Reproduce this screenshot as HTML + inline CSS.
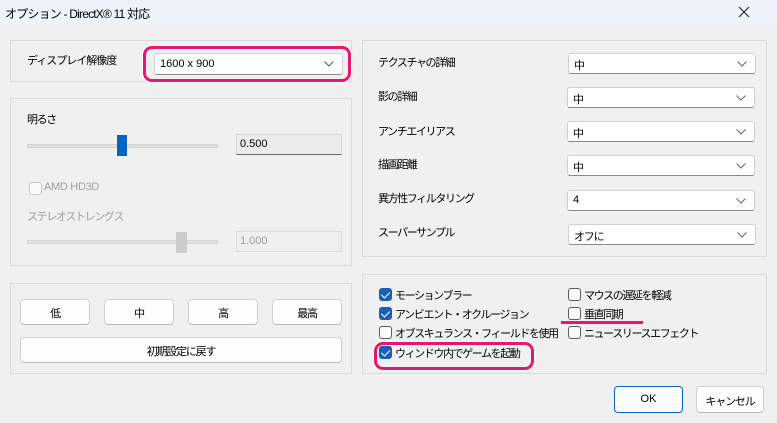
<!DOCTYPE html>
<html><head><meta charset="utf-8"><style>
*{box-sizing:border-box;margin:0;padding:0}
body{width:777px;height:423px;background:#f0f0f0;font-family:"Liberation Sans","Noto Sans CJK JP",sans-serif;font-size:12px;color:#000;position:relative;overflow:hidden}
.a{position:absolute}
.title{left:0;top:0;width:777px;height:24px;background:#eef2fa}
.panel{position:absolute;border:1px solid #dadada}
.dd{position:absolute;background:#fff;border:1px solid #d0d0d0;border-bottom-color:#8a8a8a;border-radius:3px;height:21px;font-size:12px;padding:3px 0 0 5px}
.dd svg{position:absolute;right:8px;top:7px}
.btn{position:absolute;background:#fdfdfd;border:1px solid #d0d0d0;border-bottom-color:#b8b8b8;border-radius:4px;text-align:center;font-size:12px}
.cb{position:absolute;width:13px;height:13px;border:1px solid #5c5c5c;border-radius:3px;background:#fbfbfb}
.cb.on{background:#1a5fb4;border-color:#1a5fb4}
.cb.on::after{content:"";position:absolute;left:3px;top:1px;width:4px;height:7px;border:solid #fff;border-width:0 1.5px 1.5px 0;transform:rotate(45deg)}
.lbl{position:absolute;font-size:11px;white-space:nowrap;letter-spacing:-1.4px}
.j{font-size:11px;letter-spacing:-1.2px}
</style></head><body>
<div class="a title"></div>
<div class="lbl" style="left:5px;top:5px;font-size:12px;letter-spacing:-0.8px">オプション - DirectX® 11 対応</div>
<svg class="a" style="left:738px;top:6px" width="12" height="12"><path d="M1 1L11 11M11 1L1 11" stroke="#222" stroke-width="1.1"/></svg>

<div class="panel" style="left:10px;top:40px;width:342px;height:42px"></div>
<div class="lbl" style="left:27px;top:52px;letter-spacing:-1px">ディスプレイ解像度</div>
<div class="a" style="left:143px;top:46px;width:208px;height:36px;border:3px solid #e4186e;border-radius:9px;box-shadow:0 0 0 1px #fff"></div>
<div class="dd" style="left:154px;top:53px;width:189px;height:22px;padding-top:4px;font-size:11px">1600 x 900<svg width="10" height="6"><path d="M0.5 0.5L5 5L9.5 0.5" stroke="#555" fill="none"/></svg></div>

<div class="panel" style="left:10px;top:98px;width:342px;height:168px"></div>
<div class="lbl" style="left:27px;top:111px">明るさ</div>
<div class="a" style="left:27px;top:144px;width:191px;height:4px;background:#e2e2e2;border:1px solid #d2d2d2"></div>
<div class="a" style="left:117px;top:135px;width:10px;height:21px;background:#0067c0"></div>
<div class="a" style="left:236px;top:134px;width:106px;height:21px;background:#ececec;border:1px solid #d8d8d8;border-bottom:1px solid #6a6a6a;padding:3px 3px;font-size:11px">0.500</div>
<div class="cb" style="left:29px;top:182px;border-color:#c8c8c8"></div>
<div class="lbl" style="left:44px;top:181px;color:#a0a0a0;letter-spacing:-0.3px">AMD HD3D</div>
<div class="lbl" style="left:27px;top:208px;color:#a0a0a0">ステレオストレングス</div>
<div class="a" style="left:27px;top:240px;width:191px;height:4px;background:#e2e2e2;border:1px solid #d6d6d6"></div>
<div class="a" style="left:176px;top:232px;width:11px;height:21px;background:#cccccc"></div>
<div class="a" style="left:236px;top:231px;width:106px;height:21px;background:#efefef;border:1px solid #dddddd;padding:3px 3px;color:#a0a0a0;font-size:11px">1.000</div>

<div class="panel" style="left:10px;top:283px;width:342px;height:91px"></div>
<div class="btn j" style="left:20px;top:299px;width:70px;height:26px;padding-top:5px">低</div>
<div class="btn j" style="left:104px;top:299px;width:70px;height:26px;padding-top:5px">中</div>
<div class="btn j" style="left:188px;top:299px;width:70px;height:26px;padding-top:5px">高</div>
<div class="btn j" style="left:272px;top:299px;width:70px;height:26px;padding-top:5px">最高</div>
<div class="btn j" style="left:20px;top:337px;width:322px;height:26px;padding-top:5px">初期設定に戻す</div>

<div class="panel" style="left:362px;top:40px;width:405px;height:217px"></div>
<div class="lbl" style="left:378px;top:54px">テクスチャの詳細</div>
<div class="lbl" style="left:378px;top:88px">影の詳細</div>
<div class="lbl" style="left:378px;top:123px">アンチエイリアス</div>
<div class="lbl" style="left:378px;top:156px">描画距離</div>
<div class="lbl" style="left:378px;top:190px">異方性フィルタリング</div>
<div class="lbl" style="left:378px;top:224px">スーパーサンプル</div>
<div class="dd j" style="left:568px;top:53px;width:188px">中<svg width="10" height="6"><path d="M0.5 0.5L5 5L9.5 0.5" stroke="#666" fill="none"/></svg></div>
<div class="dd j" style="left:567px;top:87px;width:188px">中<svg width="10" height="6"><path d="M0.5 0.5L5 5L9.5 0.5" stroke="#666" fill="none"/></svg></div>
<div class="dd j" style="left:567px;top:121px;width:188px">中<svg width="10" height="6"><path d="M0.5 0.5L5 5L9.5 0.5" stroke="#666" fill="none"/></svg></div>
<div class="dd j" style="left:567px;top:155px;width:188px">中<svg width="10" height="6"><path d="M0.5 0.5L5 5L9.5 0.5" stroke="#666" fill="none"/></svg></div>
<div class="dd j" style="left:567px;top:190px;width:188px">4<svg width="10" height="6"><path d="M0.5 0.5L5 5L9.5 0.5" stroke="#666" fill="none"/></svg></div>
<div class="dd j" style="left:568px;top:224px;width:188px">オフに<svg width="10" height="6"><path d="M0.5 0.5L5 5L9.5 0.5" stroke="#666" fill="none"/></svg></div>

<div class="panel" style="left:362px;top:274px;width:405px;height:100px"></div>
<div class="cb on" style="left:379px;top:288px"></div><div class="lbl" style="left:395px;top:287px">モーションブラー</div>
<div class="cb on" style="left:379px;top:307px"></div><div class="lbl" style="left:395px;top:306px">アンビエント・オクルージョン</div>
<div class="cb" style="left:379px;top:326px"></div><div class="lbl" style="left:395px;top:325px">オブスキュランス・フィールドを使用</div>
<div class="a" style="left:374px;top:342px;width:160px;height:28px;border:3px solid #e4186e;border-radius:9px;box-shadow:0 0 0 1px #fff"></div>
<div class="cb on" style="left:379px;top:346px"></div><div class="lbl" style="left:395px;top:345px">ウィンドウ内でゲームを起動</div>
<div class="cb" style="left:568px;top:288px"></div><div class="lbl" style="left:584px;top:287px">マウスの遅延を軽減</div>
<div class="cb" style="left:568px;top:307px"></div><div class="lbl" style="left:584px;top:306px">垂直同期</div>
<div class="a" style="left:561px;top:321px;width:82px;height:3px;background:#e4186e"></div>
<div class="cb" style="left:568px;top:326px"></div><div class="lbl" style="left:584px;top:325px">ニュースリースエフェクト</div>

<div class="btn" style="left:614px;top:386px;width:69px;height:27px;padding-top:6px;border:1px solid #0067c0;font-size:11px">OK</div>
<div class="btn j" style="left:696px;top:386px;width:68px;height:27px;padding-top:6px">キャンセル</div>
</body></html>
